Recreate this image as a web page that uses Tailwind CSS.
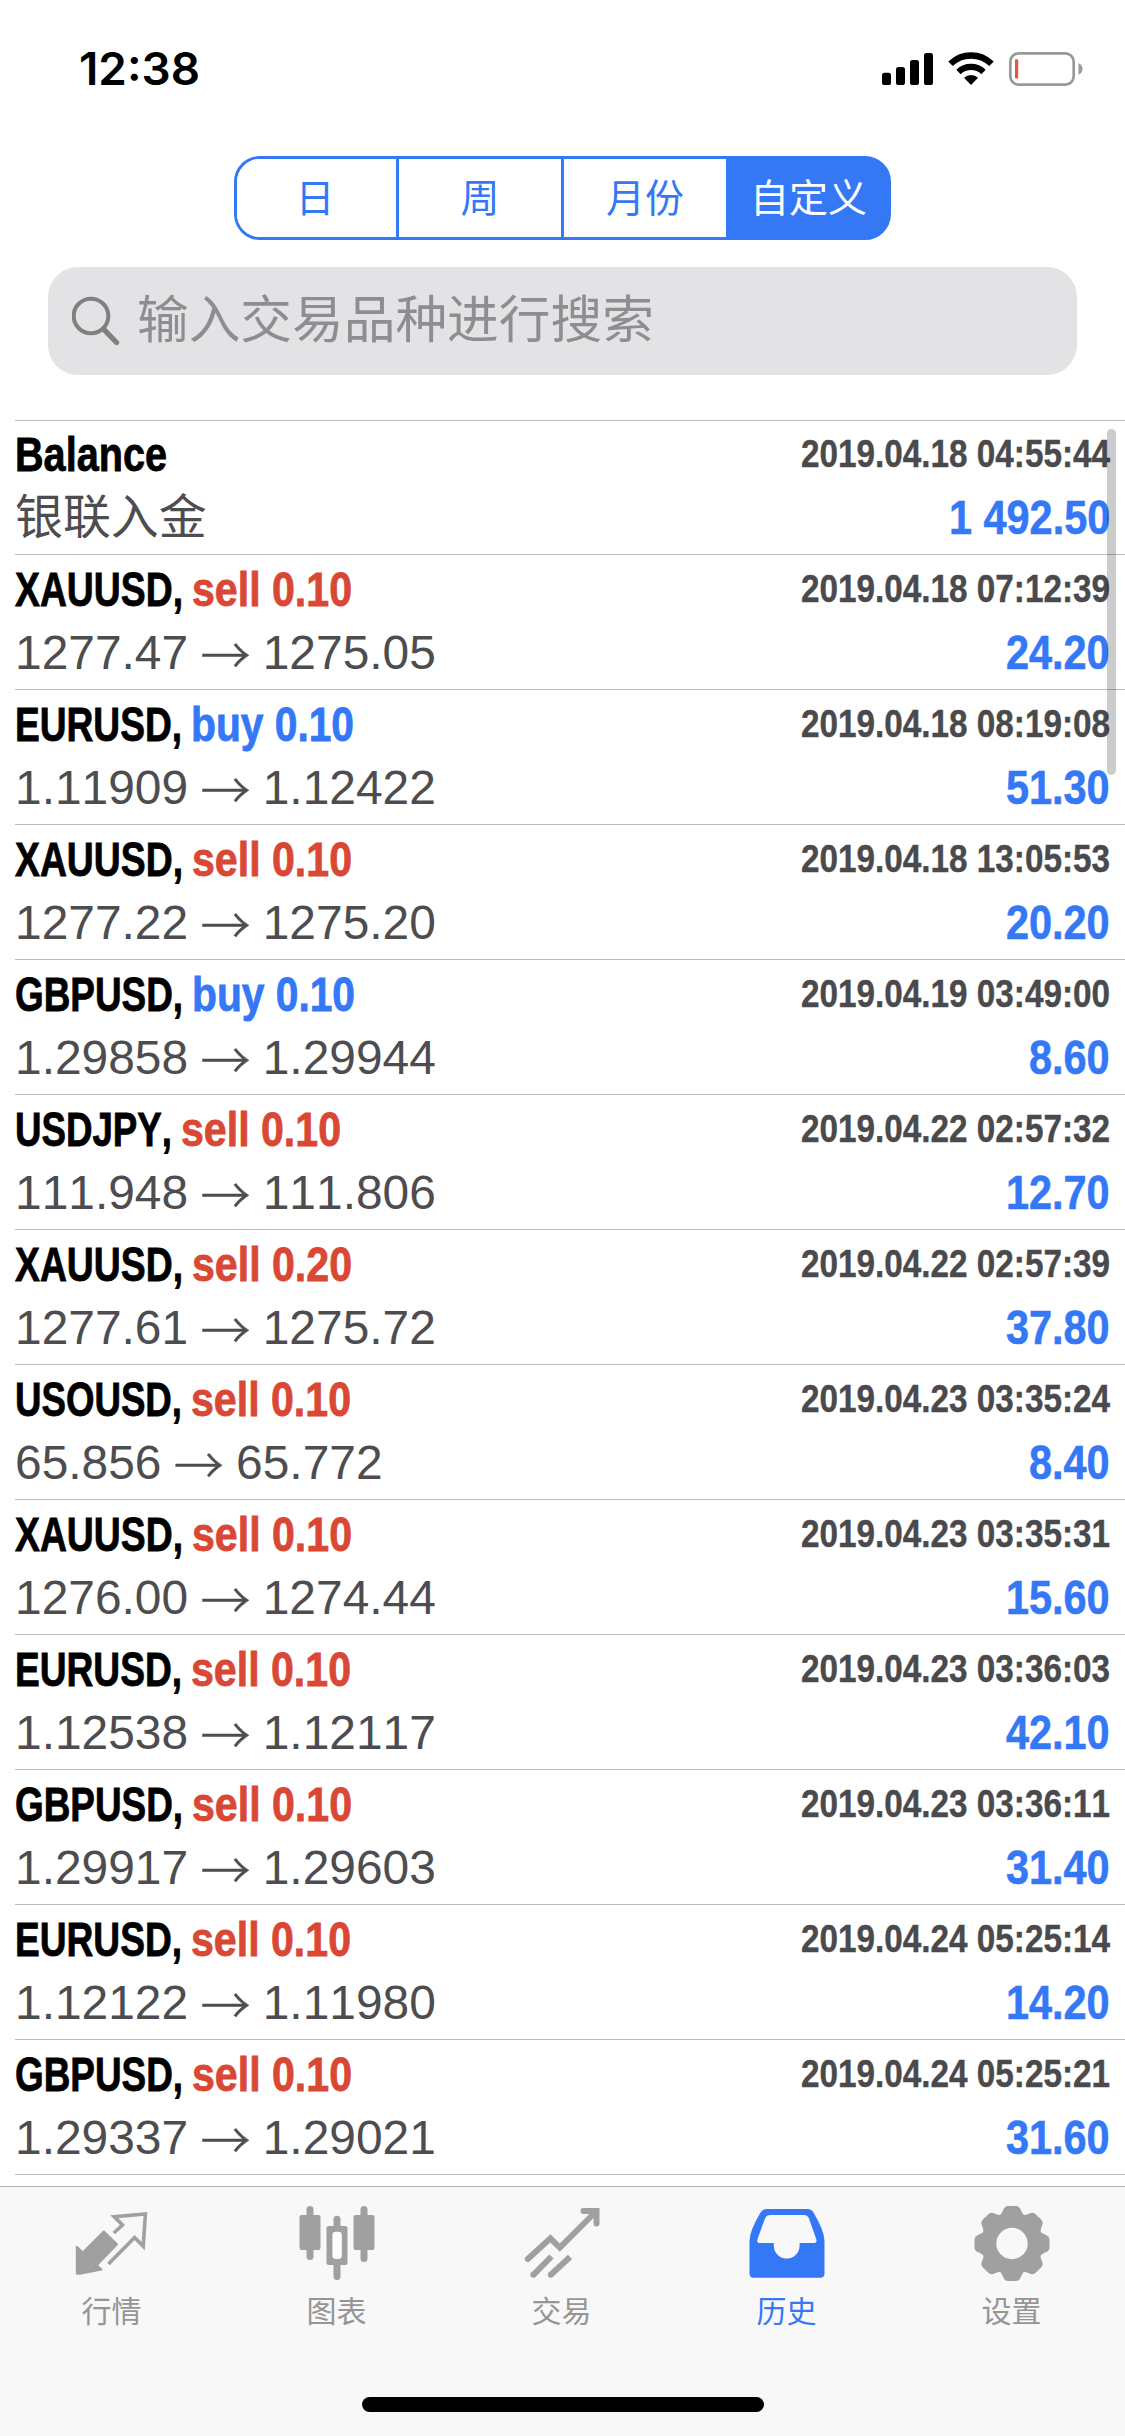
<!DOCTYPE html>
<html lang="zh-CN">
<head>
<meta charset="utf-8">
<title>历史</title>
<script src="https://cdn.jsdelivr.net/npm/@tailwindcss/browser@4"></script>
</head>
<body class="bg-white">
<div class="relative flex flex-col w-[1125px] h-[2436px] overflow-hidden bg-white font-['Liberation_Sans','Noto_Sans_CJK_SC',sans-serif] [font-kerning:none]">

  <!-- status bar -->
  <header class="flex items-start justify-between h-[156px] shrink-0 pl-[79px] pr-[41px] pt-[41px]">
    <div class="font-['Inter',sans-serif] font-semibold text-[45px] leading-[56px] text-black"><span data-font="600 45px Inter" data-fit="121">12:38</span></div>
    <svg class="mt-[9px]" width="204" height="38" viewBox="880 50 204 38" aria-hidden="true">
      <rect x="882" y="72.7" width="9" height="12.3" rx="2.6"/>
      <rect x="896" y="67" width="9" height="18" rx="2.6"/>
      <rect x="910" y="60" width="9" height="25" rx="2.6"/>
      <rect x="924" y="53" width="9" height="32" rx="2.6"/>
      <path d="M971 85l-7-7.2a10.4 10.4 0 0 1 14 0z"/>
      <path d="M958.5 72a18 18 0 0 1 25 0" fill="none" stroke="#000" stroke-width="6.2"/>
      <path d="M950.5 63.8a29.3 29.3 0 0 1 41 0" fill="none" stroke="#000" stroke-width="6.4"/>
      <rect x="1010.3" y="53.3" width="63.4" height="31.4" rx="8.5" fill="none" stroke="#999" stroke-width="2.7"/>
      <rect x="1015" y="59.3" width="3.2" height="19.2" rx="1" fill="#e5534b"/>
      <path d="M1078.5 63.2q4 2 4 5.8t-4 5.8z" fill="#999"/>
    </svg>
  </header>

  <!-- period selector -->
  <div class="self-center flex shrink-0 w-[657px] h-[84px] rounded-[26px] border-[3px] border-[#3478f6] bg-linear-to-r from-white from-50% to-[#3478f6] to-50% overflow-hidden text-[39px] leading-[80px] text-center text-[#3478f6]">
    <div class="w-[162px] pr-[3px] border-r-[3px] border-[#3478f6] bg-white">日</div>
    <div class="w-[165px] border-r-[3px] border-[#3478f6] bg-white">周</div>
    <div class="w-[162px] bg-white">月份</div>
    <div class="flex-1 pl-[3px] bg-[#3478f6] text-white">自定义</div>
  </div>

  <!-- search field -->
  <div class="flex items-center shrink-0 mx-12 mt-[27px] h-[108px] rounded-[30px] bg-[#e3e3e5] pl-6 gap-[17px]">
    <svg width="48" height="50" viewBox="0 0 48 50" fill="none" stroke="#808083" aria-hidden="true">
      <circle cx="19" cy="20" r="17.3" stroke-width="4"/>
      <path d="M31.5 33L44.5 46.5" stroke-width="5.4" stroke-linecap="round"/>
    </svg>
    <span class="text-[51.7px] leading-[108px] text-[#8e8e91] -mt-0.5">输入交易品种进行搜索</span>
  </div>

  <!-- deal list -->
  <main class="mt-[45px] ml-[15px] h-[1766px] shrink-0 border-t border-[#bdbdbf]" id="deals"></main>

  <!-- tab bar -->
  <nav class="relative flex flex-col h-[250px] shrink-0 bg-[#f8f8f8] border-t border-[#b2b2b2]">
    <div class="grid grid-cols-5 pt-[13px] text-[30px] leading-[44px] text-center text-[#959595]">
      <div class="flex flex-col items-center">
        <svg width="90" height="84" viewBox="0 0 90 84" aria-hidden="true">
          <path d="M8.8 46.7L14.8 52.5L35.8 31.5L49 44.3L28.7 65.3L33.5 69.6L11.8 73.7H8.8Z" fill="#a0a0a0" stroke="#a0a0a0" stroke-width="2" stroke-linejoin="round"/>
          <path d="M45.8 33L54.5 25L46.2 16.6L77.4 14L75.2 46.3L66.6 37.6L40.5 64" fill="none" stroke="#a0a0a0" stroke-width="3.6"/>
        </svg>
        <span class="mt-[6px] pr-[2px]">行情</span>
      </div>
      <div class="flex flex-col items-center">
        <svg width="90" height="84" viewBox="0 0 90 84" fill="#a0a0a0" aria-hidden="true">
          <rect x="6.5" y="15" width="21" height="35" rx="2.2"/><rect x="13.5" y="6" width="7" height="54" rx="3.5"/>
          <rect x="33.5" y="26" width="21" height="39" rx="2.2"/><rect x="40.5" y="15.7" width="7" height="64.3" rx="3.5"/>
          <rect x="60.5" y="15" width="21" height="35" rx="2.2"/><rect x="67.5" y="6" width="7" height="56" rx="3.5"/>
          <rect x="39.4" y="31.7" width="9.4" height="27.3" rx="3.4" fill="#fdfdfd"/>
        </svg>
        <span class="mt-[6px] pr-[2px]">图表</span>
      </div>
      <div class="flex flex-col items-center">
        <svg width="90" height="84" viewBox="0 0 90 84" fill="none" stroke="#a0a0a0" stroke-width="6" aria-hidden="true">
          <path d="M9.8 59L32.4 38.4L41.8 47.6L78 11.5" stroke-linecap="round"/>
          <path d="M65.5 11H78.5V23.5" stroke-linecap="round"/>
          <path d="M33.5 56.5L15.3 74.8"/><circle cx="15.3" cy="74.8" r="3" fill="#a0a0a0" stroke="none"/>
          <path d="M52 57L32.8 74.8"/><circle cx="32.8" cy="74.8" r="3" fill="#a0a0a0" stroke="none"/>
        </svg>
        <span class="mt-[6px] pr-[2px]">交易</span>
      </div>
      <div class="flex flex-col items-center text-[#3478f6]">
        <svg width="90" height="84" viewBox="0 0 90 84" fill="#3478f6" fill-rule="evenodd" aria-hidden="true">
          <path d="M23.5 9H64.5Q68.5 9 70.5 12.5Q81.5 31 81.5 41V73.5Q81.5 77.7 77.3 77.7H10.7Q6.5 77.7 6.5 73.5V41Q6.5 31 17.5 12.5Q19.5 9 23.5 9ZM27 15Q23.7 15 22.2 18L14.5 39Q13.4 43 17 43H30.8V45.5A12.9 13.2 0 0 0 56.6 45.5V43H70.5Q74.5 43 73.2 39L65.8 18Q64.3 15 61 15Z"/>
        </svg>
        <span class="mt-[6px] pr-[2px]">历史</span>
      </div>
      <div class="flex flex-col items-center">
        <svg width="90" height="84" viewBox="0 0 90 84" aria-hidden="true">
          <defs><path id="tooth" d="M-13.5 -27Q-10.5 -29 -9 -33Q-7.5 -37.5 -4 -37.5H4Q7.5 -37.5 9 -33Q10.5 -29 13.5 -27Z"/></defs>
          <g transform="translate(44 43.5)" fill="#a0a0a0">
            <circle r="23.2" fill="none" stroke="#a0a0a0" stroke-width="15"/>
            <use href="#tooth"/><use href="#tooth" transform="rotate(45)"/><use href="#tooth" transform="rotate(90)"/><use href="#tooth" transform="rotate(135)"/>
            <use href="#tooth" transform="rotate(180)"/><use href="#tooth" transform="rotate(225)"/><use href="#tooth" transform="rotate(270)"/><use href="#tooth" transform="rotate(315)"/>
          </g>
        </svg>
        <span class="mt-[6px] pr-[2px]">设置</span>
      </div>
    </div>
    <div class="self-center mt-auto mb-6 w-[402px] h-[15px] rounded-full bg-black"></div>
  </nav>

  <!-- scroll indicator -->
  <div class="absolute left-[1107px] top-[429px] w-[9px] h-[346px] rounded-full bg-black/20"></div>
</div>

<script>
const big = 'bold 48px "Liberation Sans"';
const small = 'bold 39px "Liberation Sans"';
const symbolWidth = { XAUUSD: 168, EURUSD: 167, GBPUSD: 168, USDJPY: 157, USOUSD: 167 };
const deals = [
  ['XAUUSD', 'sell', '0.10', '1277.47', '1275.05', '2019.04.18 07:12:39', '24.20'],
  ['EURUSD', 'buy', '0.10', '1.11909', '1.12422', '2019.04.18 08:19:08', '51.30'],
  ['XAUUSD', 'sell', '0.10', '1277.22', '1275.20', '2019.04.18 13:05:53', '20.20'],
  ['GBPUSD', 'buy', '0.10', '1.29858', '1.29944', '2019.04.19 03:49:00', '8.60'],
  ['USDJPY', 'sell', '0.10', '111.948', '111.806', '2019.04.22 02:57:32', '12.70'],
  ['XAUUSD', 'sell', '0.20', '1277.61', '1275.72', '2019.04.22 02:57:39', '37.80'],
  ['USOUSD', 'sell', '0.10', '65.856', '65.772', '2019.04.23 03:35:24', '8.40'],
  ['XAUUSD', 'sell', '0.10', '1276.00', '1274.44', '2019.04.23 03:35:31', '15.60'],
  ['EURUSD', 'sell', '0.10', '1.12538', '1.12117', '2019.04.23 03:36:03', '42.10'],
  ['GBPUSD', 'sell', '0.10', '1.29917', '1.29603', '2019.04.23 03:36:11', '31.40'],
  ['EURUSD', 'sell', '0.10', '1.12122', '1.11980', '2019.04.24 05:25:14', '14.20'],
  ['GBPUSD', 'sell', '0.10', '1.29337', '1.29021', '2019.04.24 05:25:21', '31.60'],
];
const row = (rowClass, title, time, detail, profit) => `
  <section class="${rowClass} border-b border-[#bdbdbf] pr-[15px]">
    <div class="flex justify-between h-[62px] text-[48px] leading-[63px] font-bold [-webkit-text-stroke-width:0.8px]">
      <div class="flex">${title}</div>
      <div class="text-[39px] leading-[62px] text-[#4a4a4d] [-webkit-text-stroke-width:0.4px]"><span data-font='${small}' data-fit="309">${time}</span></div>
    </div>
    <div class="flex justify-between h-[65px] text-[48px] leading-[65px] text-[#4d4d50]">
      <div class="flex whitespace-pre text-[47.9px]">${detail}</div>
      <div class="font-bold text-[#3478f6] [-webkit-text-stroke-width:0.6px]"><span data-font='${big}' data-scale="0.863">${profit}</span></div>
    </div>
  </section>`;
document.getElementById('deals').innerHTML =
  row('h-[134px] pt-[2px]', `<span class="text-black" data-font='${big}' data-fit="152">Balance</span>`, '2019.04.18 04:55:44', '<span>银联入金</span>', '1 492.50') +
  deals.map(([sym, side, lots, from, to, time, profit]) => row('h-[135px] pt-[3px]',
    `<span class="text-black" data-font='${big}' data-fit="${symbolWidth[sym]}">${sym},</span><span class="w-[9px]"></span><span class="${side === 'buy' ? 'text-[#3478f6]' : 'text-[#d94834]'}" data-font='${big}' data-fit="${side === 'buy' ? 163 : 160}">${side} ${lots}</span>`,
    time,
    `${from} <span class="w-12 text-[50px] -indent-px font-['Noto_Sans_CJK_SC',sans-serif] font-light [-webkit-text-stroke-width:0.4px]">→</span> ${to}`,
    profit)).join('');

const ctx = document.createElement('canvas').getContext('2d');
document.querySelectorAll('[data-font]').forEach(el => {
  ctx.font = el.dataset.font;
  ctx.fontKerning = 'none';
  const natural = ctx.measureText(el.textContent).width;
  const width = el.dataset.fit ? +el.dataset.fit : natural * +el.dataset.scale;
  const inner = document.createElement('span');
  inner.className = 'inline-block origin-left whitespace-pre';
  inner.textContent = el.textContent;
  inner.style.transform = `scaleX(${width / natural})`;
  el.textContent = '';
  el.classList.add('inline-block', 'whitespace-pre');
  el.style.width = width + 'px';
  el.appendChild(inner);
});
</script>
</body>
</html>
